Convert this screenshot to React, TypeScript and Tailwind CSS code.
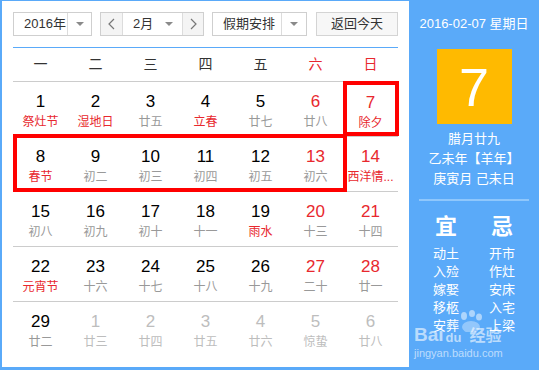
const RED = "text-[#e8282e]";

type Cell = { d: number; l: string; lr?: boolean; dr?: boolean; other?: boolean; today?: boolean };

const rows: Cell[][] = [
  [
    { d: 1, l: "祭灶节", lr: true },
    { d: 2, l: "湿地日", lr: true },
    { d: 3, l: "廿五" },
    { d: 4, l: "立春", lr: true },
    { d: 5, l: "廿七" },
    { d: 6, l: "廿八", dr: true },
    { d: 7, l: "除夕", dr: true, lr: true, today: true },
  ],
  [
    { d: 8, l: "春节", lr: true },
    { d: 9, l: "初二" },
    { d: 10, l: "初三" },
    { d: 11, l: "初四" },
    { d: 12, l: "初五" },
    { d: 13, l: "初六", dr: true },
    { d: 14, l: "西洋情...", dr: true, lr: true },
  ],
  [
    { d: 15, l: "初八" },
    { d: 16, l: "初九" },
    { d: 17, l: "初十" },
    { d: 18, l: "十一" },
    { d: 19, l: "雨水", lr: true },
    { d: 20, l: "十三", dr: true },
    { d: 21, l: "十四", dr: true },
  ],
  [
    { d: 22, l: "元宵节", lr: true },
    { d: 23, l: "十六" },
    { d: 24, l: "十七" },
    { d: 25, l: "十八" },
    { d: 26, l: "十九" },
    { d: 27, l: "二十", dr: true },
    { d: 28, l: "廿一", dr: true },
  ],
  [
    { d: 29, l: "廿二" },
    { d: 1, l: "廿三", other: true },
    { d: 2, l: "廿四", other: true },
    { d: 3, l: "廿五", other: true },
    { d: 4, l: "廿六", other: true },
    { d: 5, l: "惊蛰", other: true },
    { d: 6, l: "廿八", other: true },
  ],
];

function Tri() {
  return <div className="h-0 w-0 border-l-[4px] border-r-[4px] border-t-[4px] border-l-transparent border-r-transparent border-t-[#8a8a8a]" />;
}

function Chevron({ dir }: { dir: "l" | "r" }) {
  return (
    <svg width="7" height="12" viewBox="0 0 7 12">
      <polyline
        points={dir === "l" ? "6,1 1,6 6,11" : "1,1 6,6 1,11"}
        fill="none"
        stroke="#777"
        strokeWidth="1.2"
      />
    </svg>
  );
}

export default function App() {
  return (
    <div className="relative flex h-[370px] w-[539px] bg-white font-['Liberation_Sans','Noto_Sans_CJK_SC',sans-serif]">
      {/* left calendar */}
      <div className="h-full w-[409px] border-b-[3px] border-l-2 border-t border-[#5aaaf9] px-[11px] pt-[11px]">
        {/* toolbar */}
        <div className="flex h-[24px] whitespace-nowrap text-[13px] text-[#333]">
          <div className="flex w-[79px] border border-[#cfcfcf]">
            <div className="flex flex-1 items-center pl-[10px]">2016年</div>
            <div className="flex w-[24px] items-center justify-center border-l border-[#dcdcdc]">
              <Tri />
            </div>
          </div>
          <div className="ml-[8px] flex w-[104px] border border-[#cfcfcf]">
            <div className="flex w-[22px] items-center justify-center border-r border-[#dcdcdc] bg-[#f4f4f4]">
              <Chevron dir="l" />
            </div>
            <div className="flex flex-1 items-center justify-between pl-[10px] pr-[9px]">
              <span>2月</span>
              <Tri />
            </div>
            <div className="flex w-[21px] items-center justify-center border-l border-[#dcdcdc] bg-[#f4f4f4]">
              <Chevron dir="r" />
            </div>
          </div>
          <div className="ml-[8px] flex w-[95px] border border-[#cfcfcf]">
            <div className="flex flex-1 items-center pl-[10px]">假期安排</div>
            <div className="flex w-[25px] items-center justify-center border-l border-[#dcdcdc]">
              <Tri />
            </div>
          </div>
          <div className="ml-[9px] flex w-[82px] items-center justify-center border border-[#d4d4d4] bg-[#f7f7f7]">
            返回今天
          </div>
        </div>

        <div className="mt-[11px] h-px bg-[#5aaaf9]" />

        {/* week header */}
        <div className="grid h-[34px] grid-cols-7 items-center border-b border-[#cccccc] text-center text-[14px] text-[#333]">
          <span>一</span>
          <span>二</span>
          <span>三</span>
          <span>四</span>
          <span>五</span>
          <span className={RED}>六</span>
          <span className={RED}>日</span>
        </div>

        {/* days */}
        {rows.map((row, ri) => (
          <div
            key={ri}
            className={`grid h-[55px] grid-cols-7 ${ri < rows.length - 1 ? "border-b border-[#cccccc]" : ""}`}
          >
            {row.map((c, ci) => (
              <div
                key={ci}
                className={`flex flex-col items-center pt-[10px] text-center ${c.today ? "border border-[#ffb400] pt-[9px]" : ""}`}
              >
                <span
                  className={`text-[17px] leading-[20px] ${
                    c.other ? "text-[#bdbdbd]" : c.dr ? RED : "text-black"
                  }`}
                >
                  {c.d}
                </span>
                <span
                  className={`whitespace-nowrap text-[12px] leading-[20px] ${
                    c.other ? "text-[#bdbdbd]" : c.lr ? RED : "text-[#999]"
                  }`}
                >
                  {c.l}
                </span>
              </div>
            ))}
          </div>
        ))}
      </div>

      {/* right panel */}
      <div className="flex flex-1 flex-col items-center bg-[#5aaaf9] pt-[14px] text-white">
        <div className="text-[13px] leading-[20px]">2016-02-07 星期日</div>
        <div className="mt-[15px] flex h-[75px] w-[75px] items-center justify-center bg-[#ffba00] text-[54px] leading-none">
          7
        </div>
        <div className="mt-[5px] flex flex-col items-center text-[13px] leading-[20px]">
          <span>腊月廿九</span>
          <span>乙未年【羊年】</span>
          <span>庚寅月 己未日</span>
        </div>
        <div className="mt-[10px] h-[2px] w-[110px] bg-[#8fc7fc]" />
        <div className="mt-[12px] flex gap-[26px]">
          <div className="flex w-[30px] flex-col items-center">
            <span className="text-[22px] font-bold leading-[28px]">宜</span>
            <div className="mt-[4px] flex flex-col items-center text-[13px] leading-[18px]">
              <span>动土</span>
              <span>入殓</span>
              <span>嫁娶</span>
              <span>移柩</span>
              <span>安葬</span>
            </div>
          </div>
          <div className="flex w-[30px] flex-col items-center">
            <span className="text-[22px] font-bold leading-[28px]">忌</span>
            <div className="mt-[4px] flex flex-col items-center text-[13px] leading-[18px]">
              <span>开市</span>
              <span>作灶</span>
              <span>安床</span>
              <span>入宅</span>
              <span>上梁</span>
            </div>
          </div>
        </div>
      </div>

      {/* annotation boxes */}
      <div className="pointer-events-none absolute left-[343px] top-[81px] h-[55px] w-[56px] border-4 border-[#ff0000]" />
      <div className="pointer-events-none absolute left-[13px] top-[134px] h-[58px] w-[334px] border-4 border-[#ff0000]" />

      {/* watermark */}
      <div className="pointer-events-none absolute left-[414px] top-[310px] text-white/60">
        <svg className="absolute left-[42px] top-[0px]" width="30" height="22" viewBox="0 0 30 22">
          <ellipse cx="8" cy="6" rx="3" ry="4" fill="rgba(255,255,255,0.5)" />
          <ellipse cx="16" cy="3.5" rx="3" ry="3.5" fill="rgba(255,255,255,0.5)" />
          <ellipse cx="23" cy="7" rx="3" ry="3.5" fill="rgba(255,255,255,0.5)" />
          <ellipse cx="15" cy="17" rx="9" ry="6" fill="rgba(255,255,255,0.35)" />
        </svg>
        <div className="relative mt-[15px] flex items-end font-bold leading-none">
          <span className="text-[19px]">Bai</span>
          <span className="ml-[2px] text-[13px]">du</span>
          <span className="ml-[8px] text-[16px]">经验</span>
        </div>
        <div className="mt-[4px] text-[11px] leading-none">jingyan.baidu.com</div>
      </div>
    </div>
  );
}
